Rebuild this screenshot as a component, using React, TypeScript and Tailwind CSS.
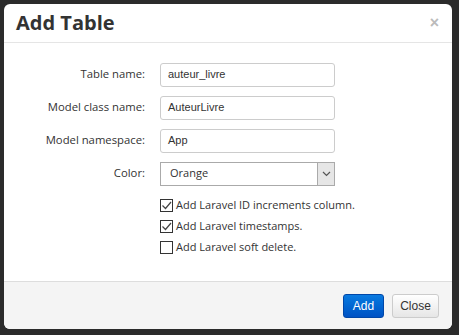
import React from "react";

function Check({ checked, label }: { checked: boolean; label: string }) {
  return (
    <div className="flex items-center h-[21px]">
      <span className="w-[13px] h-[13px] border border-[#333] bg-white flex items-center justify-center">
        {checked && (
          <svg width="11" height="11" viewBox="0 0 11 11">
            <path d="M1.5 5.5 L4.5 8.5 L10 2" fill="none" stroke="#444" strokeWidth="1.2" />
          </svg>
        )}
      </span>
      <span className="ml-[3px] text-[11px] text-[#333] font-['Open_Sans',sans-serif]">{label}</span>
    </div>
  );
}

function Row({ label, children }: { label: string; children: React.ReactNode }) {
  return (
    <div className="flex items-center h-[33px]">
      <div className="w-[141px] text-right text-[11.3px] text-[#333] font-['Open_Sans',sans-serif]">{label}</div>
      <div className="ml-[15px]">{children}</div>
    </div>
  );
}

function Input({ value }: { value: string }) {
  return (
    <div className="w-[175px] h-[24px] border border-[#ccc] rounded-[3px] bg-white flex items-center px-[7px] text-[11px] text-[#333] font-['Liberation_Sans',Arial,sans-serif]">
      {value}
    </div>
  );
}

export default function App() {
  return (
    <div className="w-[459px] h-[335px] bg-[#2b2b2b] pt-[4px] pl-[4px]">
      <div className="w-[448px] h-[325px] bg-white rounded-[6px] flex flex-col overflow-hidden">
        <div className="h-[39px] border-b border-[#e5e5e5] flex items-center justify-between pl-[12px] pr-[13px]">
          <div className="text-[20px] font-bold text-[#333] font-['Open_Sans',sans-serif] leading-none">Add Table</div>
          <div className="text-[16px] text-[#bbb] font-bold font-['Liberation_Sans',sans-serif] leading-none">×</div>
        </div>
        <div className="flex-1 pt-[15px]">
          <Row label="Table name:"><Input value="auteur_livre" /></Row>
          <Row label="Model class name:"><Input value="AuteurLivre" /></Row>
          <Row label="Model namespace:"><Input value="App" /></Row>
          <Row label="Color:">
            <div className="w-[175px] h-[24px] border border-[#aaa] bg-white flex items-center">
              <div className="flex-1 pl-[9px] text-[11px] text-[#333] font-['Open_Sans',sans-serif]">Orange</div>
              <div className="w-[17px] h-[22px] bg-[#e6e6e6] border-l border-[#aaa] flex items-center justify-center">
                <svg width="9" height="6" viewBox="0 0 9 6">
                  <path d="M1 1 L4.5 4.5 L8 1" fill="none" stroke="#555" strokeWidth="1.2" />
                </svg>
              </div>
            </div>
          </Row>
          <div className="pl-[156px] pt-[5px]">
            <Check checked label="Add Laravel ID increments column." />
            <Check checked label="Add Laravel timestamps." />
            <Check checked={false} label="Add Laravel soft delete." />
          </div>
        </div>
        <div className="h-[48px] bg-[#f4f4f4] border-t border-[#ddd] flex items-center justify-end pr-[13px] gap-[8px]">
          <button className="w-[41px] h-[24px] rounded-[3px] bg-gradient-to-b from-[#0a7ae0] to-[#0052c4] border border-[#0047a8] text-white text-[12px] font-['Liberation_Sans',Arial,sans-serif]">Add</button>
          <button className="w-[47px] h-[24px] rounded-[3px] bg-gradient-to-b from-white to-[#e6e6e6] border border-[#ccc] text-[#333] text-[12px] font-['Liberation_Sans',Arial,sans-serif]">Close</button>
        </div>
      </div>
    </div>
  );
}
